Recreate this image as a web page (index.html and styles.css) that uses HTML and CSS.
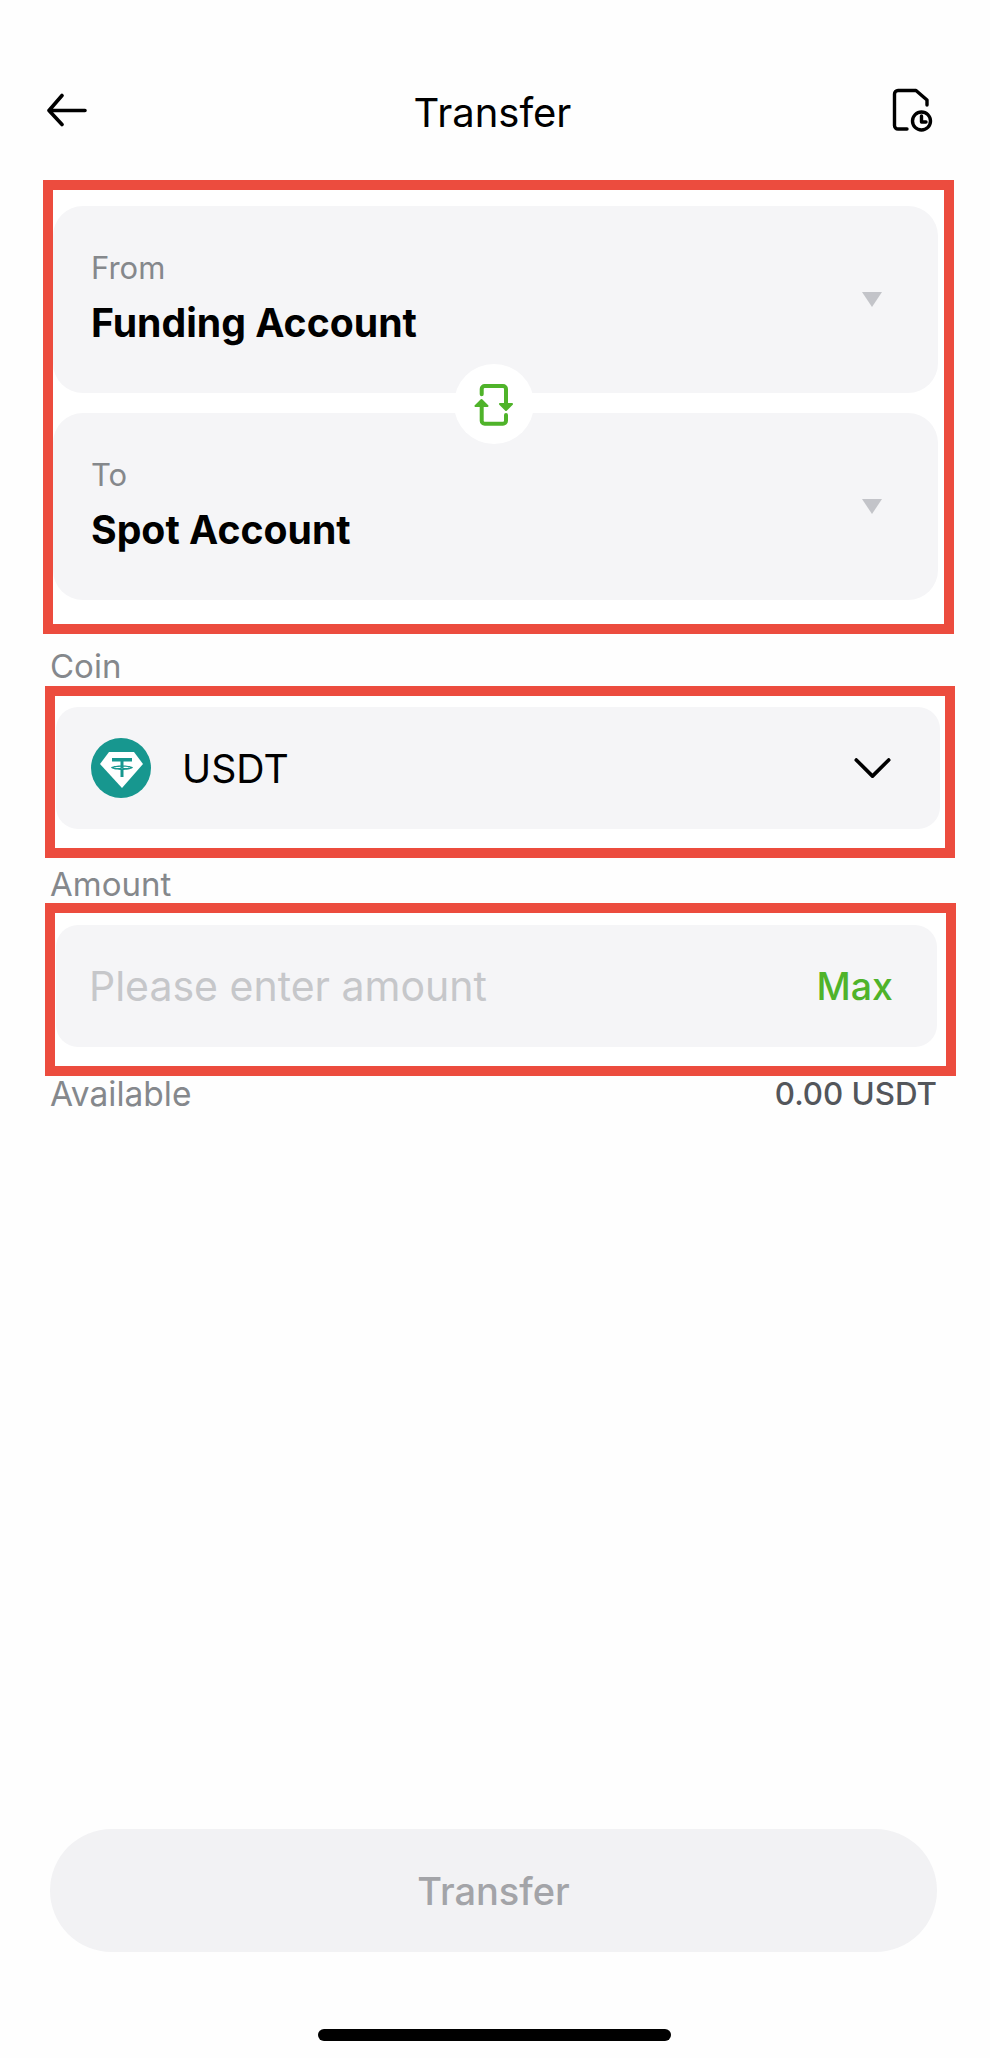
FILE: index.html
```html
<!DOCTYPE html>
<html lang="en">
<head>
<meta charset="utf-8">
<title>Transfer</title>
<link rel="stylesheet" href="styles.css">
</head>
<body>
<main class="screen">
  <header class="topbar">
    <svg class="icon-back" viewBox="0 0 44 34" fill="none" stroke="#000" stroke-width="3.6" stroke-linecap="round" stroke-linejoin="round"><path d="M16 2.500 3 17.500 16 31.500M4 17.500H39"/></svg>
    <h1 class="title">Transfer</h1>
    <svg class="icon-history" viewBox="0 0 50 50" fill="none" stroke="#000" stroke-width="3.4" stroke-linecap="round" stroke-linejoin="round"><path d="M18 42H9a3.500 3.500 0 0 1-3.500-3.500V7A3.500 3.500 0 0 1 9 3.500H27L38 13V18"/><circle cx="32.500" cy="34" r="9"/><path d="M32.500 29V35H37"/></svg>
  </header>

  <section class="mark mark-accounts">
    <div class="account">
      <div class="account-text">
        <span class="account-label">From</span>
        <strong class="account-name">Funding Account</strong>
      </div>
      <span class="caret"></span>
    </div>
    <div class="account">
      <div class="account-text">
        <span class="account-label">To</span>
        <strong class="account-name">Spot Account</strong>
      </div>
      <span class="caret"></span>
    </div>
    <button class="swap" type="button" aria-label="Swap">
      <svg viewBox="0 0 50 50" fill="none" stroke="#4fb32a" stroke-width="4" stroke-linecap="round" stroke-linejoin="round"><path d="M12.700 15.300V10a3 3 0 0 1 3-3H34a3 3 0 0 1 3 3V28M12.700 26V41.700a3 3 0 0 0 3 3H34a3 3 0 0 0 3-3V36"/><path fill="#4fb32a" stroke-width="2" d="M31 25H43L37 31ZM6.500 27H18.500L12.500 21Z"/></svg>
    </button>
  </section>

  <div class="field-label">Coin</div>
  <section class="mark mark-coin">
    <div class="field">
      <svg class="coin-logo" viewBox="0 0 60 60"><circle cx="30" cy="30" r="30" fill="#17978f"/><path fill="#fff" d="M18 14H43L52 26 31 50 9 26Z"/><path fill="#17978f" d="M21 20H41V23.500H32.500V27.500C37 27.700 41 28.300 42 29.500 41 31 37 31.700 32.500 32V39H29.500V32C25 31.700 21 31 20 29.500 21 28.300 25 27.700 29.500 27.500V23.500H21ZM29.500 28.700C26 28.900 23.500 29.200 22.800 29.600 24 30.400 38 30.400 39.200 29.600 38.500 29.200 36 28.900 32.500 28.700V30H29.500Z"/></svg>
      <span class="coin-name">USDT</span>
      <svg class="chevron" viewBox="0 0 38 22" fill="none" stroke="#000" stroke-width="3.800" stroke-linecap="round" stroke-linejoin="round"><path d="M2 2 19 19 36 2"/></svg>
    </div>
  </section>

  <div class="field-label field-label-amount">Amount</div>
  <section class="mark mark-amount">
    <div class="field field-amount">
      <span class="placeholder">Please enter amount</span>
      <span class="max">Max</span>
    </div>
  </section>

  <div class="available">
    <span>Available</span>
    <span class="available-value">0.00 USDT</span>
  </div>

  <button class="submit" type="button">Transfer</button>
  <div class="home-bar"></div>
</main>
</body>
</html>
```

FILE: styles.css
```css
* {
  box-sizing: border-box;
}

html,
body {
  margin: 0;
  padding: 0;
  background: #fff;
}

.screen {
  display: flex;
  flex-direction: column;
  width: 990px;
  height: 2058px;
  font-family: Inter, "Liberation Sans", sans-serif;
  color: #000;
  background: #fefefe;
}

.topbar {
  display: grid;
  grid-template-columns: 1fr auto 1fr;
  align-items: center;
  height: 50px;
  margin: 87px 51px 43px 46px;
}

.icon-back {
  width: 44px;
  height: 34px;
  margin-bottom: 9px;
}

.icon-history {
  justify-self: end;
  width: 50px;
  height: 50px;
  margin-bottom: 4px;
}

.title {
  margin: 0 0 2px;
  font-size: 40px;
  font-weight: 400;
  line-height: 50px;
}

.mark {
  border: 10px solid #ec4c3e;
  background: #fff;
}

.mark-accounts {
  position: relative;
  display: flex;
  flex-direction: column;
  gap: 20px;
  width: 911px;
  margin-left: 43px;
  padding: 16px 6px 24px 0;
}

.account {
  display: flex;
  align-items: center;
  justify-content: space-between;
  height: 187px;
  padding: 0 56px 0 38px;
  border-radius: 30px;
  background: #f5f5f7;
}

.account-text {
  display: flex;
  flex-direction: column;
  gap: 15px;
  padding-bottom: 2px;
}

.account-label {
  font-size: 31px;
  line-height: 34px;
  color: #85888c;
}

.account-name {
  font-size: 39.200px;
  font-weight: 700;
  line-height: 46px;
}

.caret {
  width: 0;
  height: 0;
  border-top: 15px solid #c3c4c9;
  border-left: 10px solid transparent;
  border-right: 10px solid transparent;
}

.swap {
  position: absolute;
  top: 174px;
  left: 401px;
  display: flex;
  align-items: center;
  justify-content: center;
  width: 80px;
  height: 80px;
  padding: 0;
  border: 0;
  border-radius: 50%;
  background: #fff;
}

.swap svg {
  width: 50px;
  height: 50px;
}

.field-label {
  height: 52px;
  padding-left: 50px;
  font-size: 33px;
  line-height: 64px;
  color: #85888c;
}

.field-label-amount {
  height: 45px;
  line-height: 52px;
}

.mark-coin {
  width: 910px;
  margin-left: 45px;
  padding: 11px 5px 19px 1px;
}

.mark-amount {
  width: 911px;
  margin-left: 45px;
  padding: 12px 9px 19px 1px;
}

.field {
  display: flex;
  align-items: center;
  height: 122px;
  padding: 0 49px 0 35px;
  border-radius: 22px;
  background: #f5f5f7;
}

.coin-logo {
  flex: none;
  width: 60px;
  height: 60px;
}

.coin-name {
  flex: 1;
  margin-left: 31px;
  font-size: 39.200px;
}

.chevron {
  width: 37px;
  height: 21px;
}

.field-amount {
  justify-content: space-between;
  padding: 0 44px 0 33px;
}

.placeholder {
  font-size: 41px;
  color: #c6c7ca;
}

.max {
  font-size: 37.500px;
  font-weight: 500;
  color: #4fb32a;
}

.available {
  display: flex;
  justify-content: space-between;
  margin: 0 53px 0 50px;
  font-size: 33.500px;
  line-height: 36px;
  color: #85888c;
}

.available-value {
  font-size: 31.300px;
  font-weight: 500;
  color: #53565b;
}

.submit {
  width: 887px;
  height: 123px;
  margin: auto 0 0 50px;
  padding: 0;
  border: 0;
  border-radius: 62px;
  font-family: inherit;
  font-size: 38px;
  font-weight: 500;
  color: #a3a4a8;
  background: #f2f2f4;
}

.home-bar {
  width: 353px;
  height: 12px;
  margin: 77px 0 17px 318px;
  border-radius: 6px;
  background: #000;
}
```
